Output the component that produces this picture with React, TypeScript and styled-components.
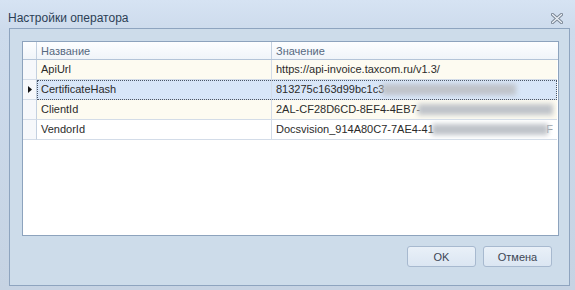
import { createGlobalStyle, styled } from "styled-components";

const GlobalStyle = createGlobalStyle`
    html, body {
        margin: 0;
        padding: 0;
        background: #c9d6e6;
    }
    * {
        box-sizing: border-box;
    }
`;

type Row = {
    name: string;
    value: string;
    blur?: number;
    tail?: string;
    kind: "odd" | "even" | "selected";
};

const rows: Row[] = [
    { name: "ApiUrl", value: "https://api-invoice.taxcom.ru/v1.3/", kind: "odd" },
    { name: "CertificateHash", value: "813275c163d99bc1c3", blur: 134, kind: "selected" },
    { name: "ClientId", value: "2AL-CF28D6CD-8EF4-4EB7-", blur: 168, kind: "odd" },
    { name: "VendorId", value: "Docsvision_914A80C7-7AE4-41", blur: 138, tail: "F", kind: "even" },
];

const App = () => {
    return (
        <>
            <GlobalStyle />
            <Window>
                <TitleBar>
                    <Title>Настройки оператора</Title>
                    <CloseIcon width="12" height="11" viewBox="0 0 12 11">
                        <path d="M1.5 1.5 L10.5 9.5 M10.5 1.5 L1.5 9.5" stroke="#7b8796" strokeWidth="3.2" strokeLinecap="round" />
                        <path d="M1.5 1.5 L10.5 9.5 M10.5 1.5 L1.5 9.5" stroke="#eef3f9" strokeWidth="1.2" strokeLinecap="round" />
                    </CloseIcon>
                </TitleBar>
                <Panel>
                    <Grid>
                        <HeaderRow>
                            <IndicatorHead />
                            <HeadCell>Название</HeadCell>
                            <HeadCell>Значение</HeadCell>
                        </HeaderRow>
                        {rows.map((row) => (
                            <DataRow key={row.name}>
                                <Indicator>
                                    {row.kind === "selected" ? (
                                        <svg width="4" height="7" viewBox="0 0 4 7">
                                            <path d="M0 0 L4 3.5 L0 7 Z" fill="#111" />
                                        </svg>
                                    ) : null}
                                </Indicator>
                                <Cells $kind={row.kind}>
                                    <Cell>{row.name}</Cell>
                                    <Cell $last>
                                        {row.value}
                                        {row.blur ? <Blurred style={{ width: row.blur }} /> : null}
                                        {row.tail ? <Tail>{row.tail}</Tail> : null}
                                    </Cell>
                                </Cells>
                            </DataRow>
                        ))}
                    </Grid>
                    <Footer>
                        <Button>OK</Button>
                        <Button>Отмена</Button>
                    </Footer>
                </Panel>
            </Window>
        </>
    );
};

const Window = styled.div`
    width: 575px;
    height: 290px;
    display: flex;
    flex-direction: column;
    padding: 0 5px 4px 9px;
    background: linear-gradient(#d6e3f3, #cddbec 30px, #c6d3e3);
    font-family: "Liberation Sans", Arial, sans-serif;
    font-size: 11px;
    color: #2b2b2b;
`;

const TitleBar = styled.div`
    height: 28px;
    display: flex;
    align-items: center;
    justify-content: space-between;
    padding: 7px 7px 0 0;
`;

const Title = styled.div`
    font-size: 12px;
    color: #2c3e55;
    margin-left: -1px;
`;

const CloseIcon = styled.svg`
    margin-top: 1px;
`;

const Panel = styled.div`
    flex: 1;
    display: flex;
    flex-direction: column;
    border: 1px solid #8ea4bf;
    background: #cddcea;
    padding: 12px 10px 0 12px;
`;

const Grid = styled.div`
    height: 195px;
    background: #fff;
    border: 1px solid #8da3bd;
    display: flex;
    flex-direction: column;
`;

const HeaderRow = styled.div`
    height: 18px;
    display: grid;
    grid-template-columns: 14px 235px 1fr;
    background: linear-gradient(#fdfeff, #f0f4f9);
    border-bottom: 1px solid #b4c4d8;
`;

const IndicatorHead = styled.div`
    border-right: 1px solid #c3d0e0;
`;

const HeadCell = styled.div`
    padding: 3px 4px 0;
    color: #56697f;
    border-right: 1px solid #c3d0e0;
    &:last-child {
        border-right: 0;
        margin-right: 1px;
    }
`;

const DataRow = styled.div`
    height: 20px;
    display: grid;
    grid-template-columns: 14px 1fr;
`;

const Indicator = styled.div`
    display: flex;
    align-items: center;
    justify-content: center;
    padding-bottom: 1px;
    background: #f6f8fb;
    border-right: 1px solid #c3d0e0;
    border-bottom: 1px solid #d3dce8;
`;

const kindBg = {
    odd: "#fdfbf1",
    even: "#ffffff",
    selected: "#d8e6f8",
};

const Cells = styled.div<{ $kind: Row["kind"] }>`
    display: grid;
    grid-template-columns: 235px 1fr;
    background: ${(p) => kindBg[p.$kind]};
    border-bottom: 1px solid #d3dce8;
    margin-right: 1px;
    outline: ${(p) => (p.$kind === "selected" ? "1px dotted #4a5566" : "none")};
    outline-offset: -1px;
`;

const Cell = styled.div<{ $last?: boolean }>`
    display: flex;
    align-items: center;
    padding: 0 4px 1px;
    white-space: nowrap;
    overflow: hidden;
    border-right: ${(p) => (p.$last ? "0" : "1px solid #d3dce8")};
`;

const Blurred = styled.span`
    display: inline-block;
    height: 11px;
    background: #bfc3c9;
    filter: blur(2.5px);
    margin-left: -2px;
`;

const Tail = styled.span`
    color: #9aa0a8;
    margin-left: -2px;
`;

const Footer = styled.div`
    display: flex;
    justify-content: flex-end;
    gap: 7px;
    padding: 10px 7px 0 0;
`;

const Button = styled.div`
    width: 69px;
    height: 21px;
    display: flex;
    align-items: center;
    justify-content: center;
    border: 1px solid #a7b9cf;
    border-radius: 3px;
    background: linear-gradient(#e9f0f8, #dbe6f2);
    color: #3d4654;
    font-size: 11px;
`;

export default App;
